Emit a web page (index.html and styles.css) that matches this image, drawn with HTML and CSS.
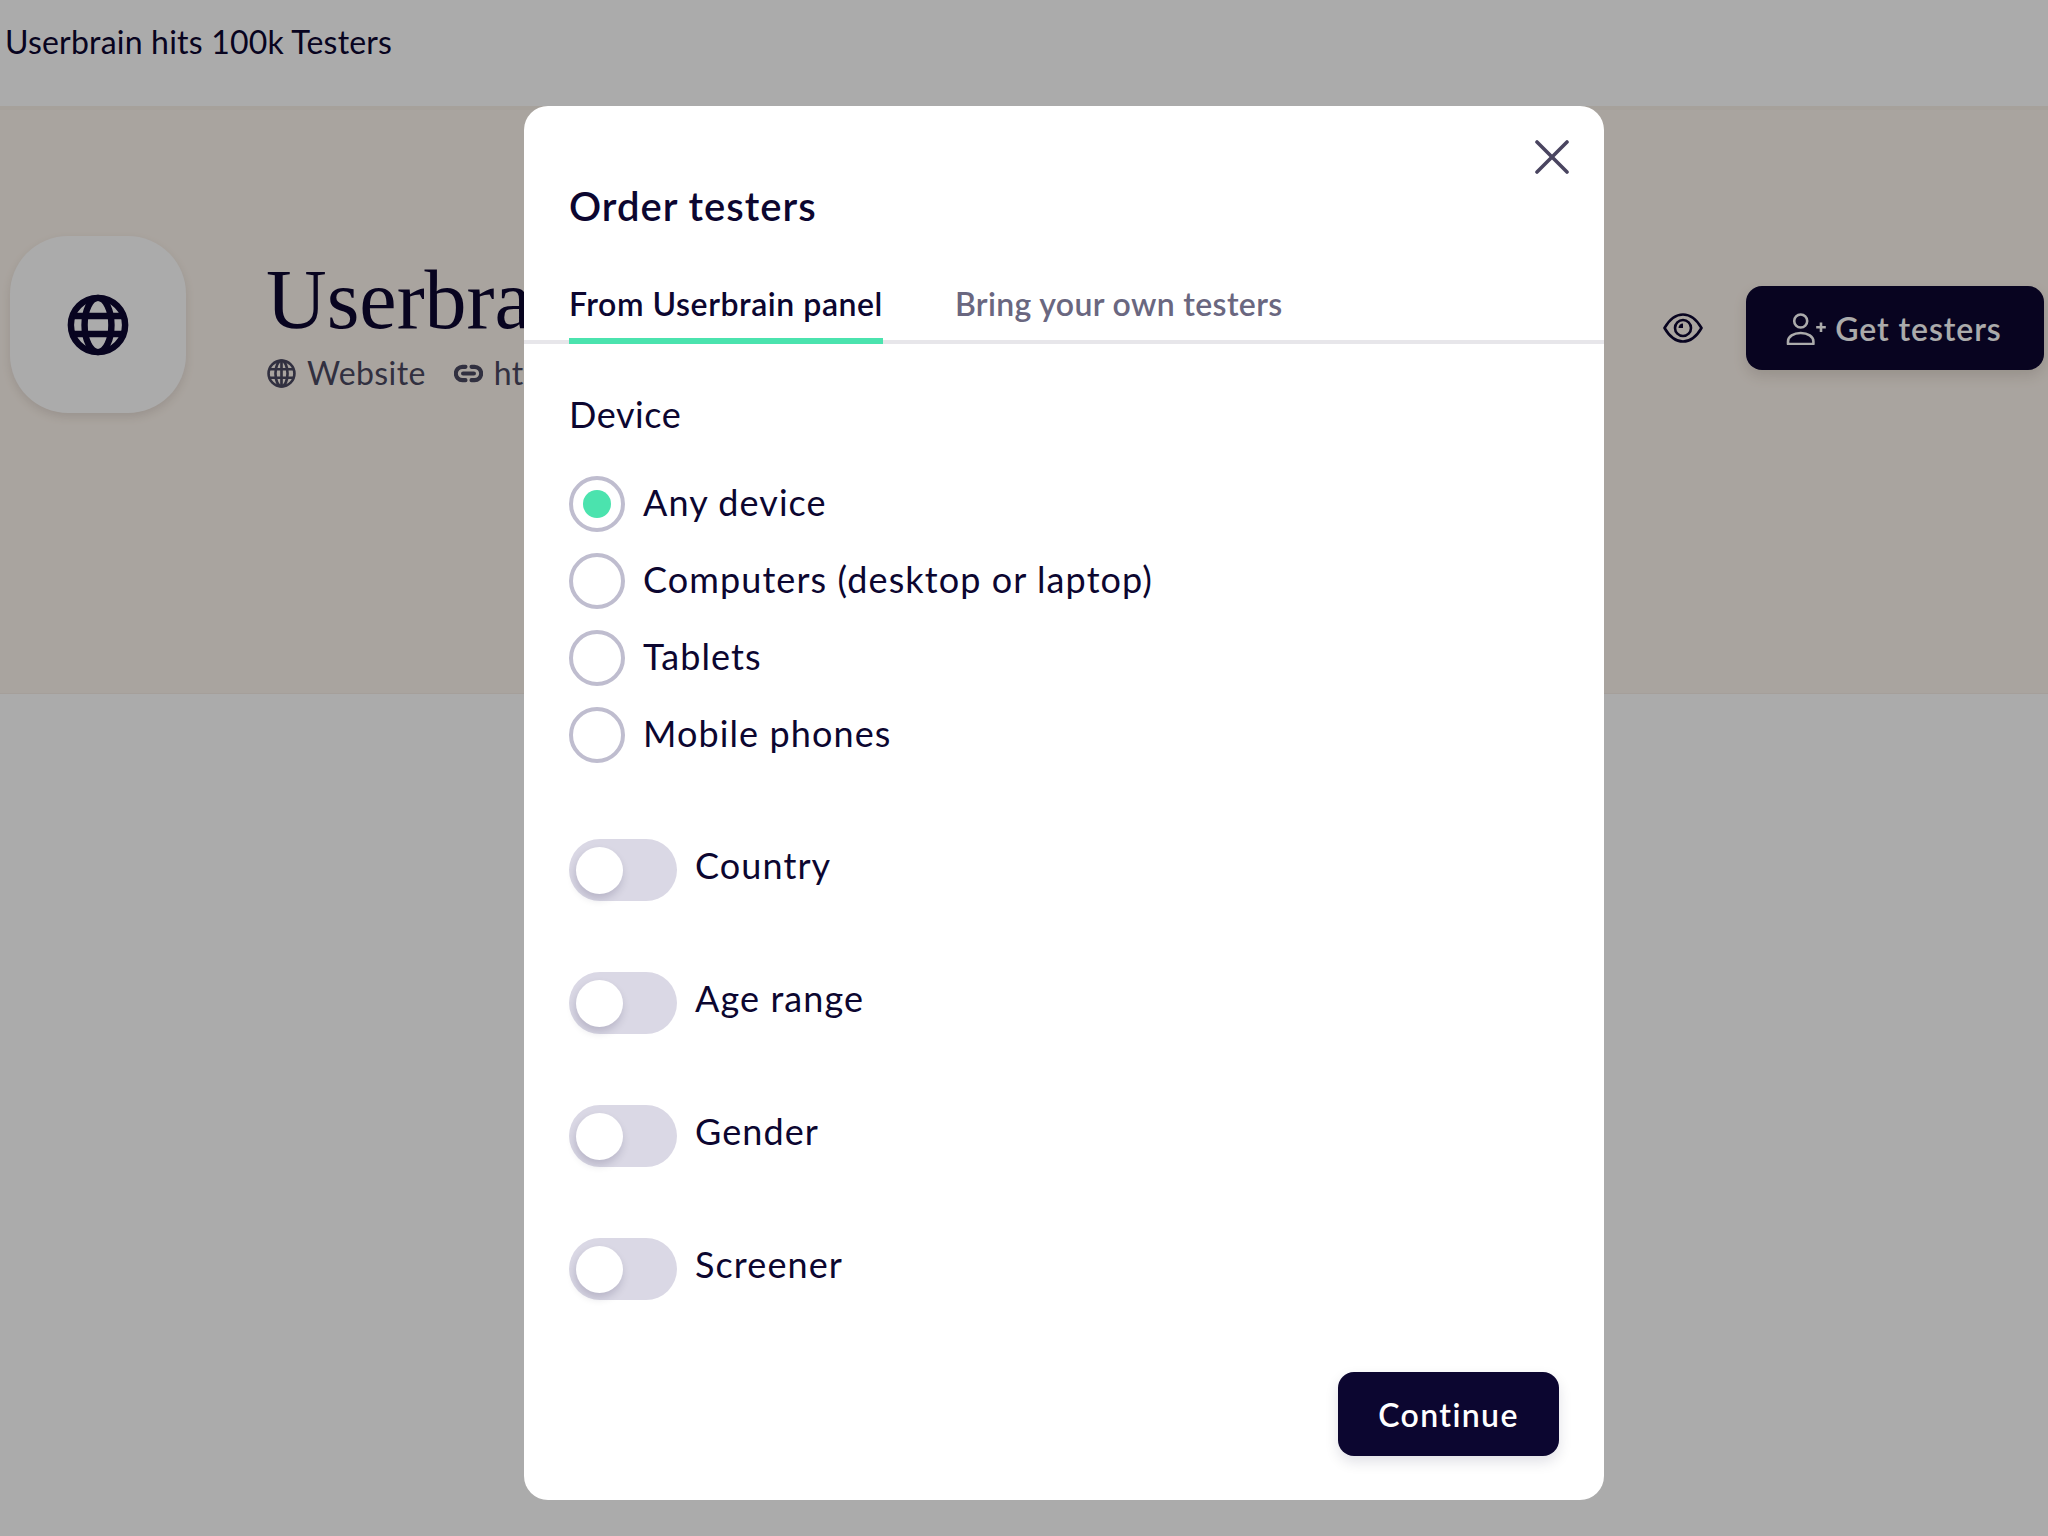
FILE: index.html
```html
<!DOCTYPE html>
<html lang="en">
<head>
<meta charset="utf-8">
<title>Order testers</title>
<link rel="stylesheet" href="styles.css">
</head>
<body>
<header class="topbar"><span class="topbar-link">Userbrain hits 100k Testers</span></header>
<section class="hero">
  <div class="avatar">
    <svg class="avatar-icon" viewBox="0 0 24 24"><g fill="none" stroke="currentColor" stroke-width="2.500"><circle cx="12" cy="12" r="10.500"/><ellipse cx="12" cy="12" rx="5.200" ry="10.500"/><path d="M2.500 8.500h19M2.500 15.500h19"/></g></svg>
  </div>
  <div class="hero-text">
    <h1 class="hero-title">Userbrain</h1>
    <div class="hero-meta">
      <svg class="meta-icon" viewBox="0 0 24 24"><g fill="none" stroke="currentColor" stroke-width="2.200"><circle cx="12" cy="12" r="10.700"/><ellipse cx="12" cy="12" rx="5" ry="10.700"/><path d="M2 8.500h20M2 15.500h20M12 1.500v21"/></g></svg>
      <span class="meta-label">Website</span>
      <svg class="meta-icon meta-link" viewBox="0 0 24 24"><path d="M9.500 6.500H7a5.500 5.500 0 0 0 0 11h2.500M14.500 6.500H17a5.500 5.500 0 0 1 0 11h-2.500M7.500 12h9" fill="none" stroke="currentColor" stroke-width="3.400" stroke-linecap="round"/></svg>
      <span class="meta-label meta-url">https://userbrain.com</span>
    </div>
  </div>
  <div class="hero-actions">
    <svg class="eye" viewBox="0 0 40 30"><path d="M1.500 15C7 5.500 13 1.500 20 1.500S33 5.500 38.500 15C33 24.500 27 28.500 20 28.500S7 24.500 1.500 15Z" fill="none" stroke="currentColor" stroke-width="2.600" stroke-linejoin="round"/><circle cx="20" cy="15" r="8" fill="none" stroke="currentColor" stroke-width="2.600"/><path d="M20 10.500a4.500 4.500 0 0 0-4.500 4.500H20Z" fill="currentColor"/></svg>
    <button class="btn-get">
      <svg class="person" viewBox="0 0 41 33"><circle cx="14.700" cy="9" r="6.500" fill="none" stroke="currentColor" stroke-width="2.600"/><path d="M2 32v-2.500C2 24.500 7.500 21 14.700 21s12.700 3.500 12.700 8.500V32Z" fill="none" stroke="currentColor" stroke-width="2.600" stroke-linejoin="round"/><path d="M35 10.500v9.500M30.200 15.200h9.600" fill="none" stroke="currentColor" stroke-width="2.600"/></svg>
      <span>Get testers</span>
    </button>
  </div>
</section>

<div class="overlay"></div>

<div class="modal">
  <button class="close" aria-label="Close">
    <svg viewBox="0 0 34 34"><path d="M2 2l30 30M32 2L2 32" fill="none" stroke="currentColor" stroke-width="3.600" stroke-linecap="round"/></svg>
  </button>
  <h2 class="modal-title">Order testers</h2>
  <div class="tabs">
    <span class="tab tab-active">From Userbrain panel</span>
    <span class="tab">Bring your own testers</span>
  </div>
  <div class="section-label">Device</div>
  <div class="radios">
    <div class="radio-row"><span class="radio radio-on"></span><span class="option">Any device</span></div>
    <div class="radio-row"><span class="radio"></span><span class="option">Computers (desktop or laptop)</span></div>
    <div class="radio-row"><span class="radio"></span><span class="option">Tablets</span></div>
    <div class="radio-row"><span class="radio"></span><span class="option">Mobile phones</span></div>
  </div>
  <div class="toggles">
    <div class="toggle-row"><span class="toggle"><span class="knob"></span></span><span class="option toggle-label">Country</span></div>
    <div class="toggle-row"><span class="toggle"><span class="knob"></span></span><span class="option toggle-label">Age range</span></div>
    <div class="toggle-row"><span class="toggle"><span class="knob"></span></span><span class="option toggle-label">Gender</span></div>
    <div class="toggle-row"><span class="toggle"><span class="knob"></span></span><span class="option toggle-label">Screener</span></div>
  </div>
  <div class="modal-footer"><button class="btn-continue">Continue</button></div>
</div>
</body>
</html>
```

FILE: styles.css
```css
* { box-sizing: border-box; }
html, body { margin: 0; height: 100%; }
body {
  width: 2048px;
  height: 1536px;
  overflow: hidden;
  background: #ffffff;
  color: #0c0630;
  font-family: "Lato", "Noto Sans", sans-serif;
  position: relative;
}

.topbar {
  height: 110px;
  background: #ffffff;
  border-bottom: 4px solid #f8f0e8;
  padding: 22px 0 0 5px;
  font-size: 32px;
  line-height: 40px;
}
.topbar-link { letter-spacing: 0.2px; }

.hero {
  height: 584px;
  background: #fdf5ed;
  border-bottom: 1px solid #f7eee6;
  display: flex;
  align-items: flex-start;
  padding: 126px 4px 0 10px;
}
.avatar {
  width: 176px;
  height: 177px;
  border-radius: 58px;
  background: #ffffff;
  box-shadow: 0 4px 10px rgba(60, 40, 30, 0.12);
  display: flex;
  align-items: center;
  justify-content: center;
  flex: none;
}
.avatar-icon { width: 62px; height: 62px; color: #0c0630; }
.hero-text { margin-left: 80px; padding-top: 22px; width: 1000px; flex: none; }
.hero-title {
  margin: 0;
  font-family: "Liberation Serif", serif;
  font-weight: 400;
  font-size: 84px;
  line-height: 84px;
}
.hero-meta {
  display: flex;
  align-items: center;
  margin: 9px 0 0 1px;
  color: #4a4860;
  font-size: 32px;
  line-height: 44px;
}
.meta-icon { width: 29px; height: 29px; flex: none; }
.meta-label { margin-left: 11px; letter-spacing: 0.4px; }
.meta-link { margin-left: 28px; }
.meta-url { margin-left: 11px; }
.hero-actions {
  margin-left: auto;
  margin-top: 50px;
  display: flex;
  align-items: center;
  gap: 43px;
}
.eye { width: 40px; height: 30px; color: #0c0630; flex: none; }
.btn-get {
  width: 298px;
  height: 84px;
  border: 0;
  border-radius: 16px;
  background: #0c0630;
  color: #ffffff;
  font-family: inherit;
  font-size: 32px;
  font-weight: 600;
  letter-spacing: 0.9px;
  display: flex;
  align-items: center;
  justify-content: center;
  gap: 8px;
  padding: 0 2px 0 0;
  box-shadow: 0 6px 14px rgba(60, 40, 30, 0.14);
}
.person { width: 41px; height: 33px; flex: none; }

.overlay {
  position: fixed;
  inset: 0;
  background: rgba(0, 0, 0, 0.33);
}

.modal {
  position: absolute;
  left: 524px;
  top: 106px;
  width: 1080px;
  height: 1394px;
  background: #ffffff;
  border-radius: 24px;
  padding: 76px 0 0;
  display: flex;
  flex-direction: column;
}
.close {
  position: absolute;
  top: 34px;
  right: 35px;
  width: 34px;
  height: 34px;
  border: 0;
  padding: 0;
  background: none;
  color: #4a4560;
}
.close svg { display: block; width: 34px; height: 34px; }
.modal-title {
  margin: 0 0 0 45px;
  font-size: 40px;
  line-height: 48px;
  font-weight: 600;
  letter-spacing: 1px;
}
.tabs {
  display: flex;
  gap: 72px;
  margin-top: 39px;
  padding-left: 45px;
  border-bottom: 4px solid #e7e6ea;
  height: 75px;
}
.tab {
  font-size: 32px;
  line-height: 42px;
  font-weight: 600;
  color: #6a6780;
  letter-spacing: 0.35px;
  height: 75px;
  padding-top: 14px;
}
.tab-active {
  color: #0c0630;
  letter-spacing: 0.55px;
  border-bottom: 6px solid #4be3ae;
}
.section-label {
  margin: 48px 0 0 45px;
  font-size: 36px;
  line-height: 44px;
  letter-spacing: 0.6px;
}
.radios {
  margin: 40px 0 0 45px;
  display: flex;
  flex-direction: column;
  gap: 22px;
}
.radio-row { display: flex; align-items: center; height: 55px; }
.radio {
  width: 56px;
  height: 56px;
  border-radius: 50%;
  border: 4px solid #bfbdcf;
  background: #ffffff;
  flex: none;
  display: flex;
  align-items: center;
  justify-content: center;
}
.radio-on::after {
  content: "";
  width: 28px;
  height: 28px;
  border-radius: 50%;
  background: #4be3ae;
}
.option {
  font-size: 36px;
  line-height: 44px;
  letter-spacing: 1.1px;
  margin-left: 18px;
  position: relative;
  top: -2px;
}
.toggles {
  margin: 77px 0 0 45px;
  display: flex;
  flex-direction: column;
  gap: 71px;
}
.toggle-row { display: flex; align-items: center; height: 62px; }
.toggle {
  width: 108px;
  height: 62px;
  border-radius: 31px;
  background: #dad8e5;
  flex: none;
  display: flex;
  align-items: center;
  padding-left: 7px;
}
.knob {
  width: 47px;
  height: 47px;
  border-radius: 50%;
  background: #ffffff;
  box-shadow: -1px 5px 9px rgba(12, 6, 48, 0.16);
}
.toggle-label { margin-left: 18px; top: -5px; }
.modal-footer {
  margin-top: auto;
  padding: 0 45px 44px 0;
  display: flex;
  justify-content: flex-end;
}
.btn-continue {
  width: 221px;
  height: 84px;
  border: 0;
  border-radius: 16px;
  background: #0c0630;
  color: #ffffff;
  font-family: inherit;
  font-size: 32px;
  font-weight: 600;
  letter-spacing: 1.4px;
  box-shadow: 0 6px 14px rgba(12, 6, 48, 0.12);
}
```
